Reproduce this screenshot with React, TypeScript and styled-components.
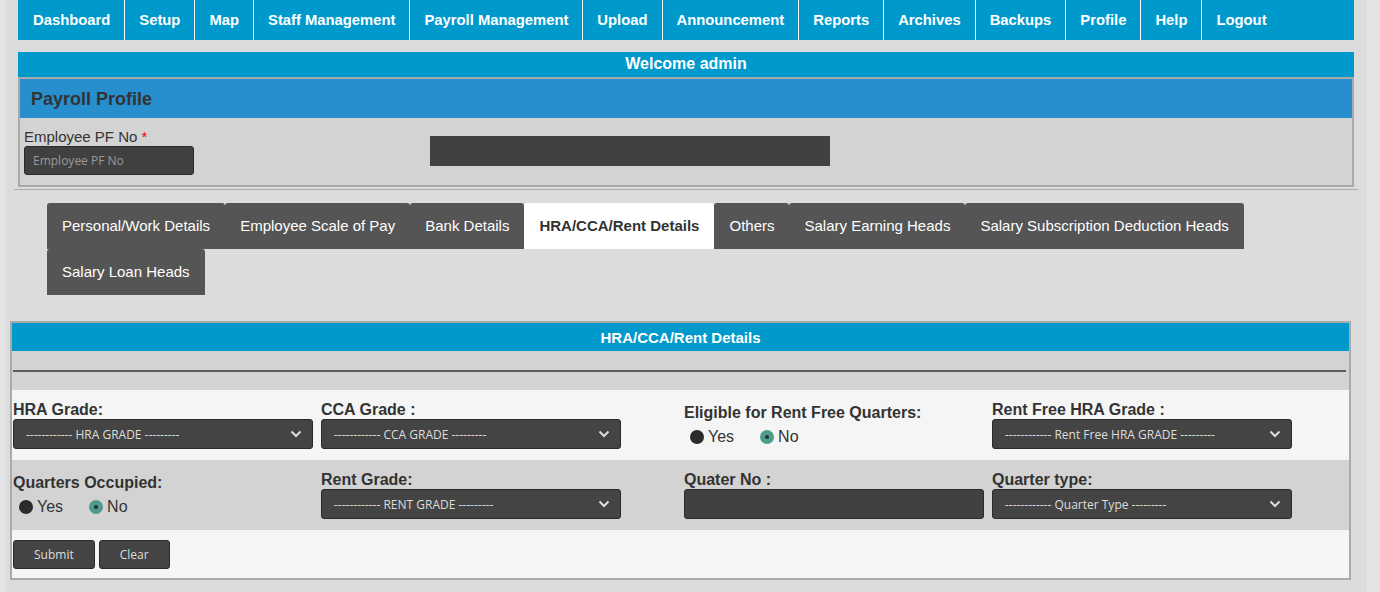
import * as React from 'react';
import styled, { createGlobalStyle, css } from 'styled-components';

const GlobalStyle = createGlobalStyle`
  html, body {
    margin: 0;
    padding: 0;
    background: #e4e4e4;
  }
  body {
    font-family: 'Liberation Sans', Arial, sans-serif;
    color: #333;
  }
  * {
    box-sizing: border-box;
  }
`;

const Page = styled.div`
  margin-left: 6px;
  width: 1361px;
  min-height: 592px;
  background: #dcdcdc;
  padding-bottom: 12px;
`;

const Nav = styled.ul`
  display: flex;
  margin: 0 0 12px 12px;
  padding: 0;
  width: 1336px;
  height: 40px;
  list-style: none;
  background: #0099cc;
`;

const NavItem = styled.li`
  display: flex;
  align-items: center;
  padding: 0 14px;
  color: #fff;
  font-size: 14.8px;
  font-weight: bold;
  border-right: 1px solid #fff;
  &:first-child {
    padding-left: 15px;
  }
  &:last-child {
    border-right: none;
  }
`;

const Welcome = styled.div`
  margin-left: 12px;
  width: 1336px;
  height: 25px;
  line-height: 24px;
  background: #0099cc;
  color: #fff;
  font-size: 16px;
  font-weight: bold;
  text-align: center;
`;

const ProfileBox = styled.div`
  margin-left: 12px;
  width: 1336px;
  border: 2px solid #a9a9a9;
  background: #d3d3d3;
`;

const ProfileHead = styled.div`
  height: 39px;
  padding-left: 11px;
  line-height: 41px;
  background: #288fcf;
  color: #333;
  font-size: 18px;
  font-weight: bold;
`;

const ProfileBody = styled.div`
  display: flex;
  align-items: flex-start;
  height: 67px;
  padding: 10px 4px 0;
`;

const PfField = styled.div`
  width: 406px;
`;

const PfLabel = styled.div`
  font-size: 15px;
  line-height: 18px;
  color: #333;
  span {
    color: #e00;
  }
`;

const PfInput = styled.input`
  display: block;
  width: 170px;
  height: 29px;
  padding: 0 8px;
  border: 1px solid #2a2a2a;
  border-radius: 3px;
  background: #404040;
  color: #ddd;
  font-family: 'Open Sans', 'Noto Sans', sans-serif;
  font-size: 12px;
  &::placeholder {
    color: #9a9a9a;
  }
`;

const NameBox = styled.div`
  width: 400px;
  height: 30px;
  margin-top: 8px;
  background: #414141;
`;

const Rule = styled.hr`
  margin: 2px 9px 0 8px;
  border: none;
  border-top: 1px solid #aaa;
  height: 0;
`;

const Tabs = styled.div`
  display: flex;
  flex-wrap: wrap;
  margin: 13px 20px 0 41px;
`;

const Tab = styled.div<{ active?: boolean }>`
  height: 46px;
  padding: 0 15px;
  line-height: 46px;
  font-size: 15px;
  background: #555;
  color: #fff;
  border-radius: 3px 3px 0 0;
  white-space: nowrap;
  ${(props) =>
    props.active &&
    css`
      background: #fff;
      color: #333;
      font-weight: bold;
    `}
`;

const Panel = styled.div`
  margin: 26px 0 0 4px;
  width: 1341px;
  border: 2px solid #aaa;
  background: #f5f5f5;
`;

const PanelHead = styled.div`
  height: 28px;
  line-height: 29px;
  background: #0099cc;
  color: #fff;
  font-size: 15px;
  font-weight: bold;
  text-align: center;
`;

const Spacer = styled.div`
  height: 39px;
  padding: 19px 3px 0 1px;
  background: #d3d3d3;
  div {
    height: 2px;
    background: #5c5c5c;
  }
`;

const FieldRow = styled.div<{ shade?: boolean }>`
  display: grid;
  grid-template-columns: 308px 363px 308px 1fr;
  align-items: center;
  height: 70px;
  padding-left: 1px;
  background: ${(props) => (props.shade ? '#d3d3d3' : '#f5f5f5')};
`;

const Cell = styled.div``;

const Label = styled.div`
  font-size: 16px;
  font-weight: bold;
  line-height: 18px;
  color: #333;
`;

const SelectWrap = styled.div`
  position: relative;
  width: 300px;
  height: 30px;
`;

const Select = styled.select`
  appearance: none;
  width: 100%;
  height: 100%;
  padding: 0 30px 0 12px;
  border: 1px solid #2a2a2a;
  border-radius: 3px;
  background: #444;
  color: #ddd;
  font-family: 'Open Sans', 'Noto Sans', sans-serif;
  font-size: 12px;
`;

const Chevron = styled.svg`
  position: absolute;
  right: 11px;
  top: 10px;
  pointer-events: none;
`;

const TextInput = styled.input`
  display: block;
  width: 300px;
  height: 30px;
  border: 1px solid #2a2a2a;
  border-radius: 3px;
  background: #414141;
`;

const Radios = styled.div`
  display: flex;
  align-items: center;
  height: 20px;
  padding-left: 6px;
  margin-top: 5px;
`;

const RadioLabel = styled.label`
  display: flex;
  align-items: center;
  margin-right: 26px;
  font-size: 16px;
  color: #333;
`;

const Dot = styled.span<{ checked?: boolean }>`
  position: relative;
  width: 14px;
  height: 14px;
  margin-right: 4px;
  border-radius: 50%;
  background: ${(props) => (props.checked ? '#4f9c8e' : '#2b2b2b')};
  ${(props) =>
    props.checked &&
    css`
      &::after {
        content: '';
        position: absolute;
        left: 5px;
        top: 5px;
        width: 4px;
        height: 4px;
        border-radius: 50%;
        background: #2b2b2b;
      }
    `}
`;

const ButtonRow = styled.div`
  display: flex;
  gap: 4px;
  height: 48px;
  padding: 10px 0 0 1px;
`;

const Button = styled.button`
  height: 29px;
  padding: 0 20px;
  border: 1px solid #2a2a2a;
  border-radius: 3px;
  background: #444;
  color: #ddd;
  font-family: 'Open Sans', 'Noto Sans', sans-serif;
  font-size: 12px;
`;

const navItems = [
  'Dashboard',
  'Setup',
  'Map',
  'Staff Management',
  'Payroll Management',
  'Upload',
  'Announcement',
  'Reports',
  'Archives',
  'Backups',
  'Profile',
  'Help',
  'Logout',
];

const tabs = [
  'Personal/Work Details',
  'Employee Scale of Pay',
  'Bank Details',
  'HRA/CCA/Rent Details',
  'Others',
  'Salary Earning Heads',
  'Salary Subscription Deduction Heads',
  'Salary Loan Heads',
];

const DropDown = ({ text }: { text: string }) => (
  <SelectWrap>
    <Select defaultValue="">
      <option value="">{text}</option>
    </Select>
    <Chevron width="12" height="10" viewBox="0 0 12 10">
      <polyline
        points="1.5,2.5 6,7 10.5,2.5"
        fill="none"
        stroke="#ddd"
        strokeWidth="2"
      />
    </Chevron>
  </SelectWrap>
);

const YesNo = () => (
  <Radios>
    <RadioLabel>
      <Dot />
      Yes
    </RadioLabel>
    <RadioLabel>
      <Dot checked />
      No
    </RadioLabel>
  </Radios>
);

export default function App() {
  return (
    <>
      <GlobalStyle />
      <Page>
        <Nav>
          {navItems.map((item) => (
            <NavItem key={item}>{item}</NavItem>
          ))}
        </Nav>
        <Welcome>Welcome admin</Welcome>
        <ProfileBox>
          <ProfileHead>Payroll Profile</ProfileHead>
          <ProfileBody>
            <PfField>
              <PfLabel>
                Employee PF No <span>*</span>
              </PfLabel>
              <PfInput placeholder="Employee PF No" />
            </PfField>
            <NameBox />
          </ProfileBody>
        </ProfileBox>
        <Rule />
        <Tabs>
          {tabs.map((tab) => (
            <Tab key={tab} active={tab === 'HRA/CCA/Rent Details'}>
              {tab}
            </Tab>
          ))}
        </Tabs>
        <Panel>
          <PanelHead>HRA/CCA/Rent Details</PanelHead>
          <Spacer>
            <div />
          </Spacer>
          <FieldRow>
            <Cell>
              <Label>HRA Grade:</Label>
              <DropDown text="------------ HRA GRADE ---------" />
            </Cell>
            <Cell>
              <Label>CCA Grade :</Label>
              <DropDown text="------------ CCA GRADE ---------" />
            </Cell>
            <Cell>
              <Label>Eligible for Rent Free Quarters:</Label>
              <YesNo />
            </Cell>
            <Cell>
              <Label>Rent Free HRA Grade :</Label>
              <DropDown text="------------ Rent Free HRA GRADE ---------" />
            </Cell>
          </FieldRow>
          <FieldRow shade>
            <Cell>
              <Label>Quarters Occupied:</Label>
              <YesNo />
            </Cell>
            <Cell>
              <Label>Rent Grade:</Label>
              <DropDown text="------------ RENT GRADE ---------" />
            </Cell>
            <Cell>
              <Label>Quater No :</Label>
              <TextInput />
            </Cell>
            <Cell>
              <Label>Quarter type:</Label>
              <DropDown text="------------ Quarter Type ---------" />
            </Cell>
          </FieldRow>
          <ButtonRow>
            <Button>Submit</Button>
            <Button>Clear</Button>
          </ButtonRow>
        </Panel>
      </Page>
    </>
  );
}
